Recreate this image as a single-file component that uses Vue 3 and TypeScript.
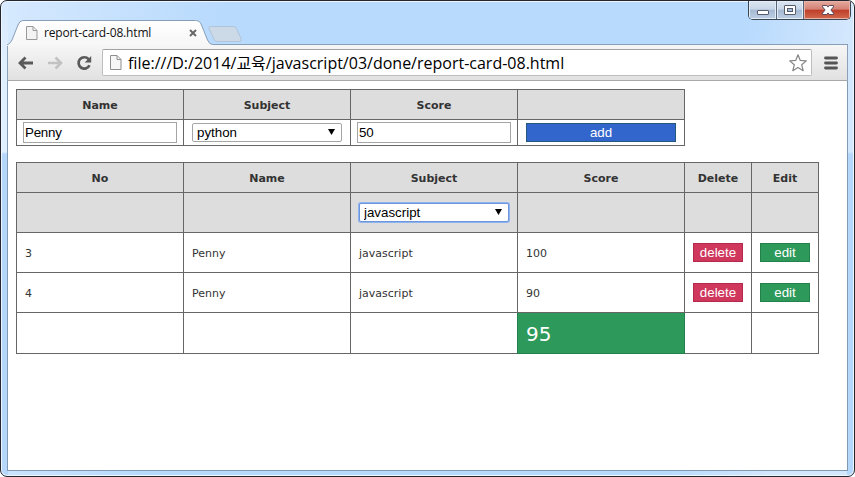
<script setup lang="ts">
import { computed, ref } from 'vue'

interface Row {
  no: number
  name: string
  subject: string
  score: number
}

const name = ref('Penny')
const subject = ref('python')
const score = ref('50')
const filter = ref('javascript')
const subjects: string[] = ['javascript', 'python']
const rows = ref<Row[]>([
  { no: 3, name: 'Penny', subject: 'javascript', score: 100 },
  { no: 4, name: 'Penny', subject: 'javascript', score: 90 },
])
const visible = computed(() => rows.value.filter((r) => r.subject === filter.value))
const average = computed(() =>
  visible.value.length ? visible.value.reduce((sum, r) => sum + r.score, 0) / visible.value.length : 0,
)

function add(): void {
  const no = Math.max(0, ...rows.value.map((r) => r.no)) + 1
  rows.value.push({ no, name: name.value, subject: subject.value, score: Number(score.value) })
}
function remove(no: number): void {
  rows.value = rows.value.filter((r) => r.no !== no)
}
function edit(row: Row): void {
  name.value = row.name
  subject.value = row.subject
  score.value = String(row.score)
}
</script>

<template>
  <div class="window">
    <div class="controls">
      <span class="ctl min">
        <svg width="28" height="18" viewBox="0 0 28 18"><rect x="8.500" y="9.500" width="11" height="4" rx="0.500" fill="#fff" stroke="#565b6b" /></svg>
      </span>
      <span class="ctl max">
        <svg width="26" height="18" viewBox="0 0 26 18">
          <rect x="7.500" y="4.500" width="11" height="9" rx="0.500" fill="#fff" stroke="#565b6b" />
          <rect x="10.500" y="7.500" width="5" height="3" fill="#a9bed8" stroke="#565b6b" />
        </svg>
      </span>
      <span class="ctl close">
        <svg width="47" height="18" viewBox="0 0 47 18">
          <path d="M18.500 4.500h4.300l1.200 1.600 1.200-1.600h4.300v1.300L26.900 9l2.600 3.200v1.300h-4.300L24 11.900l-1.200 1.600h-4.300v-1.300L21.100 9l-2.600-3.200z" fill="#fff" stroke="#5b4a5c" />
        </svg>
      </span>
    </div>

    <div class="browser">
      <div class="tabs">
        <svg class="tab-shape" width="240" height="26" viewBox="0 0 240 26">
          <defs>
            <linearGradient id="tabFill" x1="0" y1="0" x2="0" y2="1">
              <stop offset="0" stop-color="#ffffff" />
              <stop offset="1" stop-color="#f6f6f6" />
            </linearGradient>
          </defs>
          <path d="M203.500 6.500h23q2 0 3 2l4.500 10q1 3-1.500 3h-22q-2.500 0-3.500-2l-5-11q-1-2 1.500-2z" fill="#ccdae8" stroke="#b0c3d8" />
          <path d="M0 26V25Q3 24 5 20l6-15q1.500-4.500 5-4.500h172.500q4.500 0 6 4.500l6 15q2 4.500 5 4.500V26z" fill="url(#tabFill)" />
          <path d="M0 25Q3 24 5 20l6-15q1.500-4.500 5-4.500h172.500q4.500 0 6 4.500l6 15q2 4.500 5 4.500H240" fill="none" stroke="#879eb7" />
        </svg>
        <div class="tab-content">
          <svg width="12" height="14" viewBox="0 0 12 14"><path d="M.5.5h6.500l4 4v9H.5zM7 .5v4h4" fill="#f3f3f3" stroke="#999" /></svg>
          <span class="tab-title">report-card-08.html</span>
          <svg class="tab-close" width="8" height="8" viewBox="0 0 8 8"><path d="M1 1l6 6M7 1L1 7" stroke="#666" stroke-width="1.900" /></svg>
        </div>
      </div>

      <div class="toolbar">
        <svg class="nav" width="16" height="14" viewBox="0 0 16 14"><path d="M15 7H3M7.500 1.500L2 7l5.500 5.500" fill="none" stroke="#5a5a5a" stroke-width="2.800" /></svg>
        <svg class="nav" width="16" height="14" viewBox="0 0 16 14"><path d="M1 7h12M8.500 1.500L14 7l-5.500 5.500" fill="none" stroke="#c2c2c2" stroke-width="2.600" /></svg>
        <svg class="nav" width="16" height="16" viewBox="0 0 16 16">
          <path d="M12.600 4.200A5.700 5.700 0 1 0 13.500 10.300" fill="none" stroke="#5a5a5a" stroke-width="2.700" />
          <path d="M15.200 1v6.500H8.700z" fill="#5a5a5a" />
        </svg>
        <div class="address">
          <svg width="12" height="15" viewBox="0 0 12 15"><path d="M.5.5h6.500l4 4v10H.5zM7 .5v4h4" fill="#f6f6f6" stroke="#8e8e8e" /></svg>
          <span class="url">file:///D:/2014/교육/javascript/03/done/report-card-08.html</span>
          <svg class="star" width="20" height="20" viewBox="0 0 20 20">
            <path d="M10 1.800l2.300 5.600 6 .5-4.600 3.900 1.500 5.900-5.200-3.200-5.200 3.200 1.500-5.900L1.700 7.900l6-.5z" fill="#fff" stroke="#858585" stroke-width="1.200" stroke-linejoin="round" />
          </svg>
        </div>
        <svg class="menu" width="14" height="14" viewBox="0 0 14 14"><path d="M1.500 2h11M1.500 7h11M1.500 12h11" stroke="#555" stroke-width="2.800" stroke-linecap="round" /></svg>
      </div>

      <main class="page">
        <table class="form">
          <colgroup><col v-for="n in 4" :key="n" class="wide" /></colgroup>
          <tbody>
            <tr class="head"><th>Name</th><th>Subject</th><th>Score</th><th></th></tr>
            <tr class="inputs">
              <td><input v-model="name" class="text" /></td>
              <td>
                <div class="select">
                  <select v-model="subject"><option v-for="s in subjects" :key="s">{{ s }}</option></select>
                  <svg width="7" height="6" viewBox="0 0 7 6"><path d="M0 0h7L3.500 6z" /></svg>
                </div>
              </td>
              <td><input v-model="score" class="text" /></td>
              <td><button class="btn add" @click="add">add</button></td>
            </tr>
          </tbody>
        </table>

        <table class="list">
          <colgroup>
            <col v-for="n in 4" :key="n" class="wide" />
            <col class="narrow" /><col class="narrow" />
          </colgroup>
          <tbody>
            <tr class="head"><th>No</th><th>Name</th><th>Subject</th><th>Score</th><th>Delete</th><th>Edit</th></tr>
            <tr class="filter">
              <th></th><th></th>
              <th>
                <div class="select focused">
                  <select v-model="filter"><option v-for="s in subjects" :key="s">{{ s }}</option></select>
                  <svg width="7" height="6" viewBox="0 0 7 6"><path d="M0 0h7L3.500 6z" /></svg>
                </div>
              </th>
              <th></th><th></th><th></th>
            </tr>
            <tr v-for="row in visible" :key="row.no" class="data">
              <td>{{ row.no }}</td>
              <td>{{ row.name }}</td>
              <td>{{ row.subject }}</td>
              <td>{{ row.score }}</td>
              <td class="action"><button class="btn delete" @click="remove(row.no)">delete</button></td>
              <td class="action"><button class="btn edit" @click="edit(row)">edit</button></td>
            </tr>
            <tr class="total"><td></td><td></td><td></td><td class="average">{{ average }}</td><td></td><td></td></tr>
          </tbody>
        </table>
      </main>
    </div>
  </div>
</template>

<style>
body {
  margin: 0;
  background: #fff;
}
</style>

<style scoped>
.window {
  position: relative;
  box-sizing: border-box;
  width: 855px;
  height: 477px;
  padding: 18px 5px 5px;
  border: 1px solid #24262f;
  border-radius: 7px;
  overflow: hidden;
  background:
    linear-gradient(#d6e9fe 0, #e0effe 60px, #e0effe 151px, #b4d7fb 153px) left / 7px 100% no-repeat,
    linear-gradient(#d3e7fd 0 151px, #b4d7fb 153px) right / 7px 100% no-repeat,
    linear-gradient(100deg, #d6e9fe 0, #b8dafd 24%, #b8dafd 80%, #d3e7fd 91%);
  box-shadow: inset 0 0 0 1px #eef7ff;
}
.controls {
  position: absolute;
  top: 0;
  right: 3px;
  display: flex;
  box-sizing: border-box;
  width: 103px;
  height: 19px;
  border: 1px solid #3c4552;
  border-top: 0;
  border-radius: 0 0 5px 5px;
  overflow: hidden;
}
.ctl {
  box-sizing: border-box;
  height: 18px;
  background: linear-gradient(#dce6f2 0, #c7d5e6 46%, #a4b9d2 50%, #bdcfe4 100%);
  box-shadow: inset 0 0 0 1px #e3edf8;
}
.ctl svg {
  display: block;
}
.min {
  width: 28px;
  border-right: 1px solid #596476;
}
.max {
  width: 27px;
  border-right: 1px solid #596476;
}
.close {
  width: 46px;
  background: linear-gradient(#e5aba0 0, #d58073 46%, #bd3d29 50%, #d36a4e 100%);
  box-shadow: inset 0 0 0 1px #e8b3a6;
}
.browser {
  box-sizing: border-box;
  width: 843px;
  height: 452px;
  display: flex;
  flex-direction: column;
  padding: 1px 1px 0;
}
.tabs {
  position: relative;
  height: 25px;
  background: linear-gradient(#879eb7, #879eb7) 237px 24px / 604px 1px no-repeat;
}
.tab-shape {
  position: absolute;
  left: 0;
  top: 0;
  display: block;
}
.tab-content {
  position: relative;
  display: flex;
  align-items: center;
  width: 190px;
  height: 25px;
  padding-left: 19px;
}
.tab-title {
  margin-left: 6px;
  font: 12px/20px 'Open Sans', 'Noto Sans', sans-serif;
  letter-spacing: -0.17px;
  white-space: nowrap;
  color: #111;
}
.tab-close {
  position: absolute;
  left: 182px;
  top: 9px;
}
.toolbar {
  display: flex;
  align-items: center;
  box-sizing: border-box;
  height: 36px;
  padding: 0 9px 0 10px;
  border: solid #8ca1b8;
  border-width: 0 1px;
  border-bottom: 1px solid #a8a8a8;
  background: linear-gradient(#f6f6f6, #e1e1e1);
}
.nav {
  flex: none;
  margin-right: 13px;
}
.address {
  flex: 1;
  display: flex;
  align-items: center;
  box-sizing: border-box;
  height: 27px;
  margin: 0 12px 0 -3px;
  padding: 0 3px 0 7px;
  border: 1px solid #bdbdbd;
  border-top-color: #a2a2a2;
  border-radius: 2px;
  background: #fff;
}
.url {
  flex: 1;
  margin-left: 6px;
  font: 16px/24px 'Open Sans', 'Noto Sans', 'Noto Sans CJK KR', sans-serif;
  white-space: nowrap;
  color: #000;
}
.page {
  flex: 1;
  padding: 8px 8px 0;
  border: 1px solid #8299b2;
  border-top: 0;
  background: #fff;
  font: 11px/14px 'DejaVu Sans', Verdana, sans-serif;
  color: #333;
}
table {
  table-layout: fixed;
  border-spacing: 1px;
  background: #666;
}
.form {
  width: 669px;
  margin-bottom: 16px;
}
.list {
  width: 803px;
}
.wide {
  width: 166px;
}
.narrow {
  width: 66px;
}
th,
td {
  box-sizing: border-box;
  padding: 0 8px;
  background: #fff;
  text-align: left;
  vertical-align: middle;
}
th {
  background: #ddd;
  text-align: center;
}
.head th {
  height: 29px;
  padding-top: 2px;
}
.inputs td {
  height: 25px;
}
.filter th,
.data td {
  height: 39px;
}
.data td {
  padding-top: 2px;
}
.data .action {
  padding-top: 0;
}
.total td {
  height: 40px;
  padding-top: 2px;
}
.inputs td:has(.text) {
  padding: 0 6px;
}
.text {
  display: block;
  box-sizing: border-box;
  width: 154px;
  height: 21px;
  padding: 0 1px;
  border: 1px solid #a5a5a5;
  outline: 0;
  background: #fff;
  font: 13.33px 'Liberation Sans', Arial, sans-serif;
  letter-spacing: -0.25px;
  color: #000;
}
.select {
  position: relative;
  display: block;
  width: 150px;
  height: 19px;
}
.select select {
  appearance: none;
  display: block;
  box-sizing: border-box;
  width: 150px;
  height: 19px;
  margin: 0;
  padding: 0 4px;
  border: 1px solid #a5a5a5;
  border-radius: 2px;
  outline: 0;
  background: #fff;
  font: 13.33px 'Liberation Sans', Arial, sans-serif;
  color: #000;
}
.select svg {
  position: absolute;
  top: 6px;
  right: 7px;
}
.select.focused select {
  border-color: #6c95dc;
  box-shadow: 0 0 0 1px #8fb3ef;
}
.btn {
  display: block;
  box-sizing: border-box;
  height: 19px;
  margin: 0;
  padding: 0;
  border: 1px solid;
  font: 13.33px/17px 'Liberation Sans', Arial, sans-serif;
  text-align: center;
  color: #fff;
}
.add {
  width: 150px;
  border-color: #24587c;
  background: #3366cc;
}
.delete {
  width: 50px;
  border-color: #b52a4b;
  background: #cf375c;
}
.edit {
  width: 50px;
  border-color: #22804a;
  background: #2d995b;
}
.average {
  background: #2d995b;
  box-shadow: -1px 0 #22804a, 1px 0 #22804a, 0 1px #22804a, 1px 1px #22804a, -1px 1px #22804a;
  font-size: 20px;
  line-height: 24px;
  color: #fff;
}
</style>
